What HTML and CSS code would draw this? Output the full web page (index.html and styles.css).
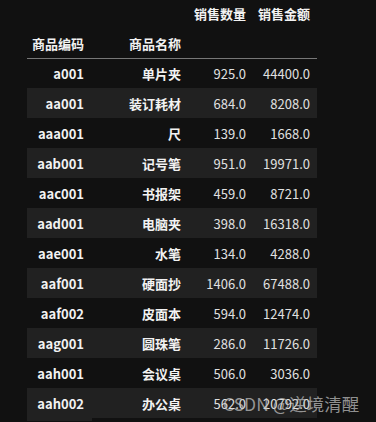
FILE: index.html
```html
<!DOCTYPE html>
<html>
<head>
<meta charset="utf-8">
<link rel="stylesheet" href="styles.css">
</head>
<body>
<div class="wrap">
<table class="df">
  <colgroup><col class="c1"><col class="c2"><col class="c3"><col class="c4"></colgroup>
  <thead>
    <tr class="h1"><th></th><th></th><th>销售数量</th><th>销售金额</th></tr>
    <tr class="h2"><th>商品编码</th><th>商品名称</th><th></th><th></th></tr>
  </thead>
  <tbody>
    <tr><th>a001</th><th>单片夹</th><td>925.0</td><td>44400.0</td></tr>
    <tr><th>aa001</th><th>装订耗材</th><td>684.0</td><td>8208.0</td></tr>
    <tr><th>aaa001</th><th>尺</th><td>139.0</td><td>1668.0</td></tr>
    <tr><th>aab001</th><th>记号笔</th><td>951.0</td><td>19971.0</td></tr>
    <tr><th>aac001</th><th>书报架</th><td>459.0</td><td>8721.0</td></tr>
    <tr><th>aad001</th><th>电脑夹</th><td>398.0</td><td>16318.0</td></tr>
    <tr><th>aae001</th><th>水笔</th><td>134.0</td><td>4288.0</td></tr>
    <tr><th>aaf001</th><th>硬面抄</th><td>1406.0</td><td>67488.0</td></tr>
    <tr><th>aaf002</th><th>皮面本</th><td>594.0</td><td>12474.0</td></tr>
    <tr><th>aag001</th><th>圆珠笔</th><td>286.0</td><td>11726.0</td></tr>
    <tr><th>aah001</th><th>会议桌</th><td>506.0</td><td>3036.0</td></tr>
    <tr><th>aah002</th><th>办公桌</th><td>562.0</td><td>20792.0</td></tr>
  </tbody>
</table>
<div class="tail"></div>
<div class="wm">CSDN @逆境清醒</div>
</div>
</body>
</html>
```
FILE: styles.css
```css
html, body {
  margin: 0;
  padding: 0;
  background: #111111;
  overflow: hidden;
}
.wrap {
  position: relative;
  padding-left: 27px;
  width: 349px;
  height: 422px;
  font-family: "Noto Sans CJK SC", "Noto Sans", sans-serif;
  font-size: 13px;
  color: #e6e6e6;
}
.df {
  border-collapse: collapse;
  table-layout: fixed;
  width: 290px;
}
.c1 { width: 64px; }
.c2 { width: 97px; }
.c3 { width: 65px; }
.c4 { width: 64px; }
.df th, .df td {
  text-align: right;
  padding: 0 7px 0 0;
  white-space: nowrap;
  line-height: 1;
}
.df th { font-weight: bold; color: #f2f2f2; }
.df td { font-weight: normal; color: #e0e0e0; }
.df thead tr { height: 29px; }
.df thead tr.h1 th { padding-bottom: 2px; }
.df thead tr.h2 th { border-bottom: 1px solid #777777; }
.df tbody tr { height: 30px; }
.df tbody tr:nth-child(even) { background: #212121; }
.tail {
  width: 65px;
  height: 3px;
  background: #212121;
}
.wm {
  position: absolute;
  left: 223px;
  top: 391px;
  font-size: 17.5px;
  color: rgba(195, 195, 195, 0.72);
  font-family: "Noto Sans CJK SC", "Noto Sans", sans-serif;
  white-space: nowrap;
}
```
